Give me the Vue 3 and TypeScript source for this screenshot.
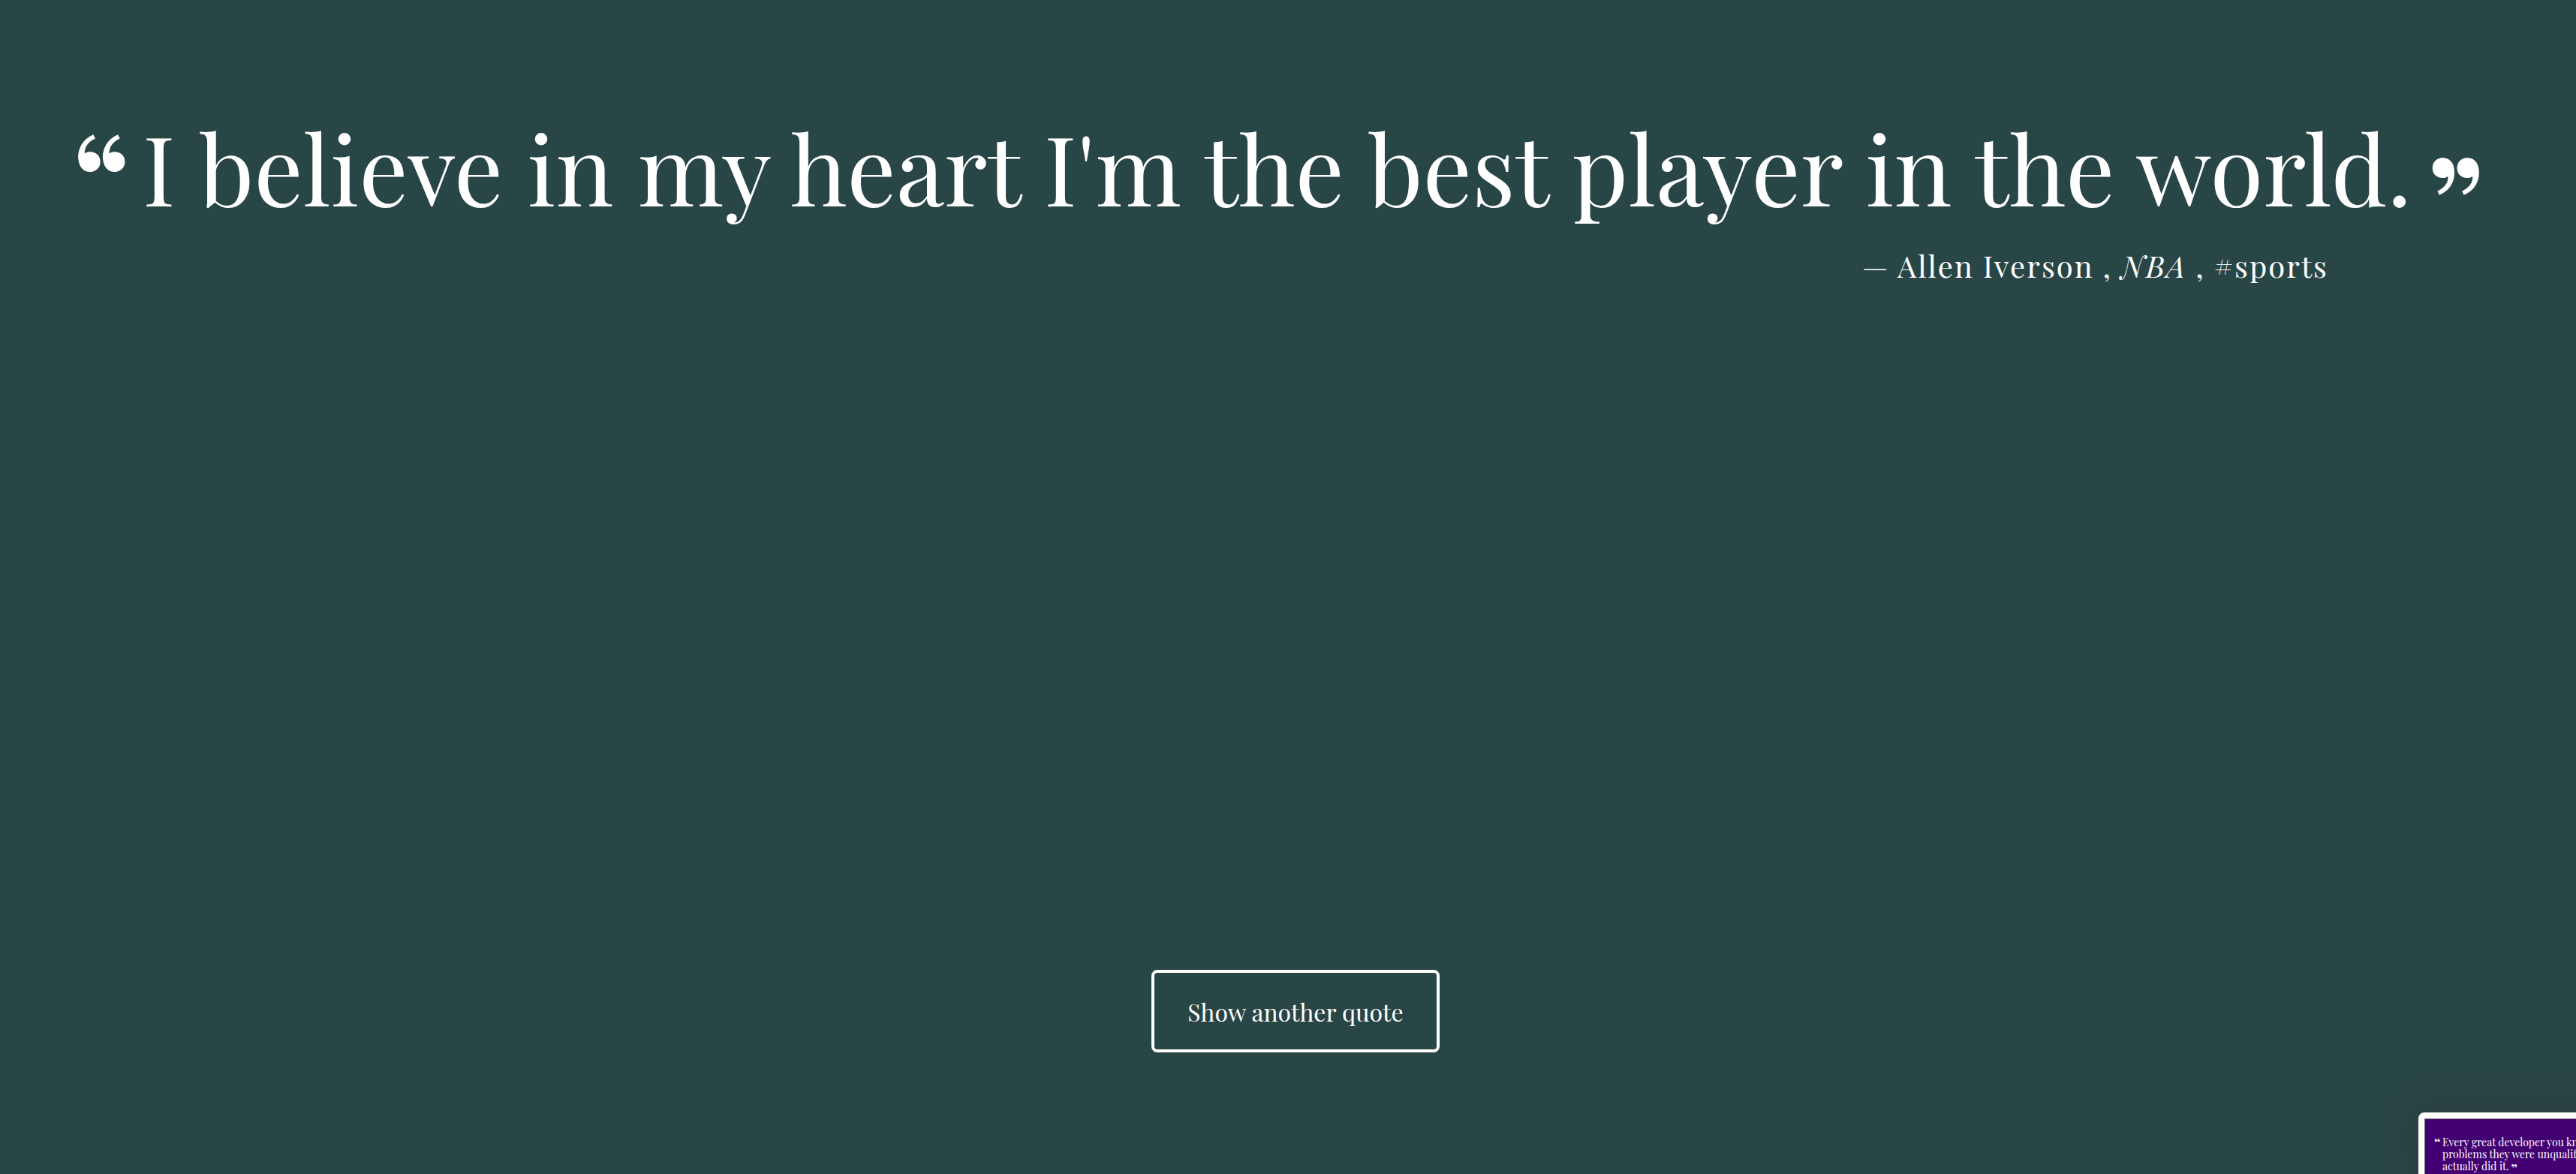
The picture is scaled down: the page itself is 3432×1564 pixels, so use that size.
<script setup lang="ts">
import { ref, computed } from 'vue'

interface Quote {
  text: string
  author: string
  source: string
  tag: string
}

const quotes: Quote[] = [
  {
    text: "I believe in my heart I'm the best player in the world.",
    author: 'Allen Iverson',
    source: 'NBA',
    tag: '#sports',
  },
]

const previewLines: string[] = [
  'Every great developer you know got there by solving',
  'problems they were unqualified to solve until they',
  'actually did it.',
]

const index = ref(0)
const quote = computed(() => quotes[index.value])

function showAnother(): void {
  index.value = (index.value + 1) % quotes.length
}
</script>

<template>
  <main class="page">
    <figure class="quote">
      <blockquote class="quote-text">
        <span class="mark mark-open">“</span>
        <p class="words">{{ quote.text }}</p>
        <span class="mark mark-close">”</span>
      </blockquote>
      <figcaption class="source">
        — {{ quote.author }} , <cite>{{ quote.source }}</cite> , {{ quote.tag }}
      </figcaption>
    </figure>

    <button class="another" type="button" @click="showAnother">Show another quote</button>

    <aside class="preview">
      <div class="preview-screen">
        <span class="preview-mark">“</span>
        <p class="preview-text">
          <span v-for="(line, i) in previewLines" :key="line" class="preview-line">{{ line
            }}<span v-if="i === previewLines.length - 1" class="preview-close">”</span></span>
        </p>
      </div>
    </aside>
  </main>
</template>

<style>
body {
  margin: 0;
  background: #294646;
}
</style>

<style scoped>
.page {
  position: relative;
  box-sizing: border-box;
  display: flex;
  flex-direction: column;
  align-items: center;
  min-height: 100vh;
  padding: 136px 76px 162px 96px;
  overflow: hidden;
  background: #294646;
  color: #fff;
  font-family: 'Playfair Display', 'Liberation Serif', serif;
}

.quote {
  align-self: stretch;
  margin: 0;
}

.quote-text {
  display: flex;
  align-items: flex-start;
  height: 170px;
  margin: 0;
  font-size: 129px;
  line-height: 170px;
}

.words {
  margin: 0 20px 0 16px;
  white-space: nowrap;
}

.mark {
  font-weight: 500;
  font-size: 180px;
  -webkit-text-stroke: 2px #fff;
}

.mark-open {
  padding-top: 16px;
}

.mark-close {
  padding-top: 46px;
}

.source {
  margin-top: 20px;
  padding-right: 254px;
  text-align: right;
  font-size: 40px;
  line-height: 56px;
  letter-spacing: 2px;
}

.another {
  margin-top: auto;
  padding: 0 44px;
  height: 110px;
  border: 4px solid #fff;
  border-radius: 8px;
  background: transparent;
  color: #fff;
  font-family: inherit;
  font-size: 32px;
  cursor: pointer;
}

.preview {
  position: absolute;
  right: -210px;
  bottom: -158px;
  box-sizing: border-box;
  width: 420px;
  height: 240px;
  border: 8px solid #fff;
  border-radius: 8px;
  box-shadow: 0 0 60px rgba(48, 48, 48, 0.5);
}

.preview-screen {
  box-sizing: border-box;
  display: flex;
  height: 100%;
  padding: 23px 12px;
  border: 1px solid #777;
  overflow: hidden;
  background: #430073;
  font-size: 14px;
  line-height: 16px;
}

.preview-mark {
  width: 11px;
  font-size: 18px;
  font-weight: 700;
}

.preview-text {
  margin: 0;
  white-space: nowrap;
}

.preview-line {
  display: block;
}

.preview-close {
  margin-left: 3px;
  font-size: 18px;
  font-weight: 700;
  line-height: 0;
  vertical-align: -5px;
}
</style>
